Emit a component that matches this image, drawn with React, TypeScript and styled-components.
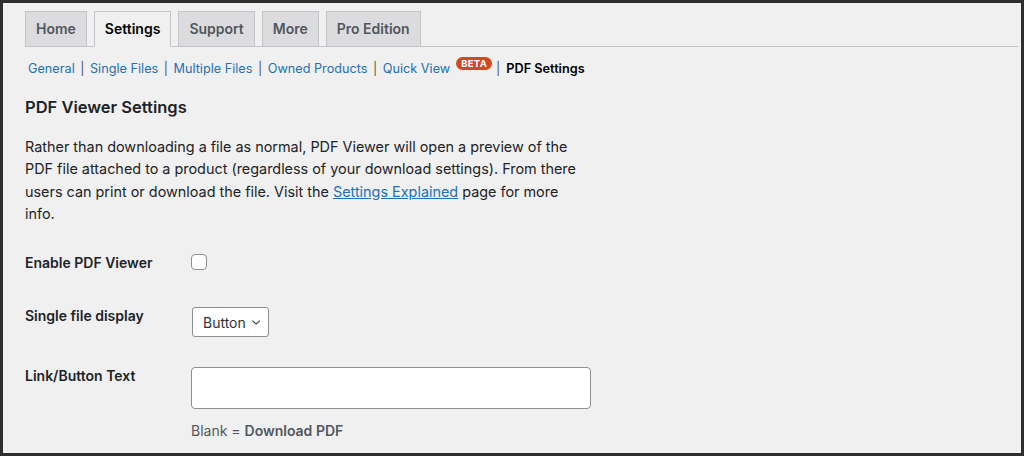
import React from 'react';
import styled, {createGlobalStyle} from "styled-components";

const GlobalStyle = createGlobalStyle`
* { box-sizing: border-box; }
html, body {
margin: 0;
padding: 0;
background: #2b2b2b;
}
body {
font-family: Inter, "Noto Sans", "Liberation Sans", sans-serif;
color: #1d2327;
}
`

const Frame = styled.div`
width: 1024px;
height: 456px;
border: 3px solid #2f2f2f;
background: #f0f0f1;
padding: 8px 3px 0 22px;
overflow: hidden;
`
const TabsWrapper = styled.nav`
display: flex;
gap: 7px;
border-bottom: 1px solid #c3c4c7;
`
const Tab = styled.a<{active?: boolean}>`
display: block;
padding: 5px 10px;
margin-bottom: -1px;
font-size: 14px;
line-height: 24px;
font-weight: 600;
text-decoration: none;
border: 1px solid #c3c4c7;
background: ${({active}) => active ? "#f0f0f1" : "#dcdcde"};
border-bottom-color: ${({active}) => active ? "#f0f0f1" : "#c3c4c7"};
color: ${({active}) => active ? "#000" : "#50575e"};
`
const SubMenu = styled.ul`
display: flex;
align-items: center;
list-style: none;
margin: 9px 0 0;
padding: 0 0 0 3px;
font-size: 12.7px;
line-height: 26px;
color: #50575e;
`
const SubItem = styled.li`
display: flex;
align-items: center;
white-space: nowrap;
`
const SubLink = styled.a<{current?: boolean}>`
text-decoration: none;
color: ${({current}) => current ? "#000" : "#2271b1"};
font-weight: ${({current}) => current ? 600 : 400};
`
const Sep = styled.span<{tight?: boolean}>`
margin: ${({tight}) => tight ? "0 6px 0 4px" : "0 5.5px"};
color: #50575e;
`
const Badge = styled.span`
display: inline-block;
margin: -12px 0 0 6px;
padding: 0 5px;
height: 13px;
line-height: 13px;
border-radius: 7px;
background: #d2491d;
color: #fff;
font-size: 9.5px;
font-weight: 700;
letter-spacing: 0.3px;
`
const Heading = styled.h2`
margin: 13px 0 0;
font-size: 16.5px;
line-height: 24px;
font-weight: 600;
color: #1d2327;
`
const Intro = styled.p`
margin: 17px 0 0;
width: 562px;
font-size: 14.4px;
line-height: 22.3px;
color: #1d2327;
a {
color: #2271b1;
text-decoration: underline;
}
`
const Form = styled.div`
display: flex;
flex-direction: column;
margin-top: 29px;
`
const Row = styled.div<{height?: number}>`
display: flex;
align-items: flex-start;
${({height}) => height && `height: ${height}px;`}
`
const Label = styled.div`
width: 166px;
flex-shrink: 0;
font-size: 14px;
line-height: 18px;
font-weight: 600;
color: #1d2327;
`
const Field = styled.div`
display: flex;
flex-direction: column;
`
const Checkbox = styled.span`
display: block;
width: 16px;
height: 16px;
border: 1px solid #8c8f94;
border-radius: 4px;
background: #fff;
`
const Select = styled.div`
display: flex;
align-items: center;
gap: 6px;
width: 77px;
height: 30px;
margin-left: 1px;
padding: 0 8px 0 10px;
border: 1px solid #8c8f94;
border-radius: 3px;
background: #fff;
font-size: 14px;
color: #2c3338;
`
const TextInput = styled.input`
width: 400px;
height: 42px;
border: 1px solid #8c8f94;
border-radius: 4px;
background: #fff;
font-size: 14px;
padding: 0 8px;
`
const Description = styled.p`
margin: 13px 0 0;
font-size: 14px;
line-height: 18px;
color: #50575e;
b {
font-weight: 600;
}
`

const subLinks = ["General", "Single Files", "Multiple Files", "Owned Products", "Quick View"];

const App = () => {
    const tabs = ["Home", "Settings", "Support", "More", "Pro Edition"];

    return (
        <>
            <GlobalStyle/>
            <Frame>
                <TabsWrapper>
                    {tabs.map(tab => <Tab key={tab} active={tab === "Settings"}>{tab}</Tab>)}
                </TabsWrapper>
                <SubMenu>
                    {subLinks.map(link => (
                        <SubItem key={link}>
                            <SubLink>{link}</SubLink>
                            {link === "Quick View" && <Badge>BETA</Badge>}
                            <Sep tight={link === "Quick View"}>|</Sep>
                        </SubItem>
                    ))}
                    <SubItem><SubLink current>PDF Settings</SubLink></SubItem>
                </SubMenu>
                <Heading>PDF Viewer Settings</Heading>
                <Intro>
                    Rather than downloading a file as normal, PDF Viewer will open a preview of the PDF file
                    attached to a product (regardless of your download settings). From there users can print or
                    download the file. Visit the <a>Settings Explained</a> page for more info.
                </Intro>
                <Form>
                    <Row height={53}>
                        <Label>Enable PDF Viewer</Label>
                        <Checkbox/>
                    </Row>
                    <Row height={60}>
                        <Label>Single file display</Label>
                        <Select>
                            Button
                            <svg width="12" height="7" viewBox="0 0 12 7" fill="none">
                                <path d="M1 1.2l5 4.6 5-4.6" stroke="#2c3338" strokeWidth="1.5" strokeLinecap="round" strokeLinejoin="round"/>
                            </svg>
                        </Select>
                    </Row>
                    <Row>
                        <Label>Link/Button Text</Label>
                        <Field>
                            <TextInput type="text"/>
                            <Description>Blank = <b>Download PDF</b></Description>
                        </Field>
                    </Row>
                </Form>
            </Frame>
        </>
    );
};

export default App;
